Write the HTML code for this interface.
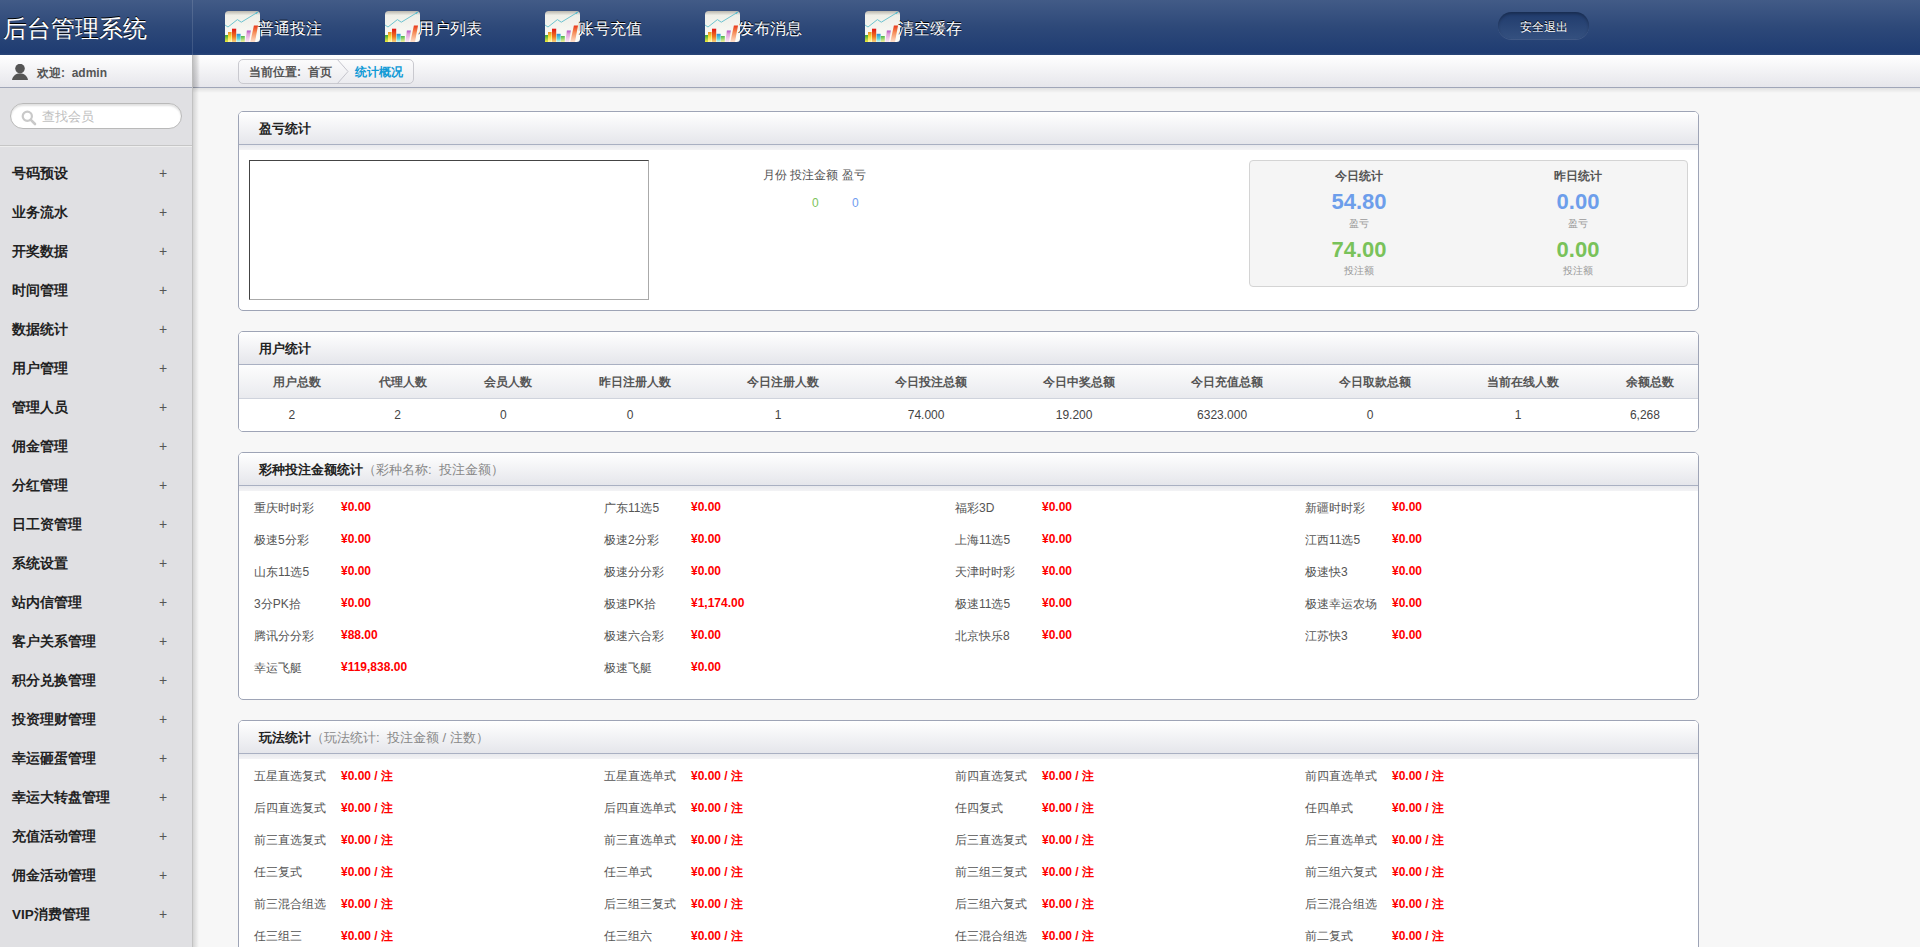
<!DOCTYPE html><html><head><meta charset="utf-8"><style>*{margin:0;padding:0;box-sizing:border-box}
html,body{width:1920px;height:947px;overflow:hidden}
body{font-family:"Liberation Sans",sans-serif;font-size:12px;color:#333;background:#f7f7f7;position:relative}
.abs{position:absolute}
#hdr{left:0;top:0;width:1920px;height:55px;background:linear-gradient(#425b87 0%,#2e4979 48%,#1f3c72 96%,#2d4879 100%);z-index:5}
#hdr .title{left:3px;top:14px;font-size:24px;color:#fff;line-height:30px;white-space:nowrap;text-shadow:0 -1px 0 #000}
#hdr .hdiv{left:192px;top:0;width:1px;height:55px;background:rgba(255,255,255,.13)}
.nav{top:11px;height:31px;width:120px}
.nav .ic{position:absolute;left:0;top:0;width:35px;height:31px}
.nav .ic svg{display:block}
.nav .tx{position:absolute;left:33px;top:9px;font-size:16px;color:#fff;line-height:18px;white-space:nowrap;text-shadow:0 -1px 0 #000}
#logout{left:1498px;top:12px;width:91px;height:27px;border-radius:13.5px;background:linear-gradient(#203b6c,#34507f);box-shadow:inset 0 2px 3px rgba(0,0,0,.25),0 1px 0 rgba(255,255,255,.12);color:#fff;font-size:12px;line-height:14px;padding-top:8px;text-align:center;text-shadow:0 -1px 0 #000}
#side{left:0;top:55px;width:192px;height:892px;background:#e0e0e3}
#sideb{left:192px;top:88px;width:1px;height:859px;background:#c2c2c2}
#sideshadow{left:192px;top:55px;width:8px;height:33px;background:linear-gradient(90deg,rgba(0,0,0,.25),rgba(0,0,0,.12) 60%,rgba(0,0,0,0))}
#sideshadow2{left:193px;top:88px;width:6px;height:859px;background:linear-gradient(90deg,rgba(0,0,0,.14),rgba(0,0,0,0))}
#welcome{left:0;top:55px;width:192px;height:33px;background:linear-gradient(#ffffff,#e6e6eb);border-bottom:1px solid #a0a6b8}
#welcome .pic{left:12px;top:9px}
#welcome .tx{left:37px;top:11px;font-size:12px;font-weight:bold;color:#555;line-height:14px;white-space:nowrap}
#search{left:10px;top:103px;width:172px;height:26px;border-radius:13px;background:#fff;border:1px solid #b9b9b9;box-shadow:inset 0 2px 2px rgba(0,0,0,.12)}
#search .sic{position:absolute;left:10px;top:6px}
#search .sic svg{display:block}
#search .tx{position:absolute;left:31px;top:5px;font-size:13px;color:#c0c0c0;line-height:16px}
#sep{left:0;top:145px;width:192px;height:1px;background:#c6c6c6;box-shadow:0 1px 0 #eee}
.mi{left:12px;font-size:13.5px;font-weight:bold;color:#222;line-height:16px;white-space:nowrap}
.mp{left:159px;font-size:14px;color:#555;line-height:16px}
#crumbbar{left:193px;top:55px;width:1727px;height:33px;background:linear-gradient(#ffffff,#e6e6eb);border-bottom:1px solid #a0a6b8}
#crumbshadow{left:193px;top:88px;width:1727px;height:5px;background:linear-gradient(rgba(0,0,0,.09),rgba(0,0,0,0))}
#crumb{left:238px;top:59px;width:176px;height:25px;border:1px solid #c9c9cf;border-radius:5px;background:linear-gradient(#fbfbfc,#ebebef)}
#crumb .a{position:absolute;left:10px;top:5px;font-weight:bold;color:#555;line-height:14px;white-space:nowrap}
#crumb .arr{position:absolute;left:98px;top:-1px}
#crumb .b{position:absolute;left:116px;top:5px;font-weight:bold;color:#109ad6;line-height:14px;white-space:nowrap}
.panel{left:238px;width:1461px;border:1px solid #9ea4b6;border-radius:5px;background:#fff;overflow:hidden}
.ph{position:absolute;left:0;top:0;width:100%;height:33px;background:linear-gradient(#ffffff,#e5e6eb);border-bottom:1px solid #a9b0c2}
.ph .t{position:absolute;left:20px;top:9px;font-size:13px;font-weight:bold;color:#222;line-height:15px;white-space:nowrap}
.ph .t span{font-weight:normal;color:#888}
.phs{position:absolute;left:0;top:33px;width:100%;height:5px;background:linear-gradient(#e8e9ed,#f3f3f5)}
.chartbox{left:249px;top:160px;width:400px;height:140px;background:#fff;border:1px solid #aaa;border-top-color:#444;border-left-color:#444}
.mtab{left:763px;top:168px;width:120px;height:16px}
.mtab span{position:absolute;top:0;font-size:12px;color:#555;line-height:14px;white-space:nowrap}
.z0{top:196px;font-size:12px;line-height:14px}
.statbox{left:1249px;top:160px;width:439px;height:127px;background:#f5f5f5;border:1px solid #d4d4d4;border-radius:4px}
.st{width:200px;text-align:center;font-weight:bold;color:#555;font-size:12px;line-height:14px}
.sv{width:200px;text-align:center;font-weight:bold;font-size:22px;line-height:24px}
.blue{color:#6d9eeb}.green{color:#79c25a}
.sl{width:200px;text-align:center;color:#999;font-size:10px;line-height:12px}
.throw{position:absolute;left:0;top:33px;width:100%;height:34px;background:linear-gradient(#fdfdfd,#e9eaee);border-bottom:1px solid #cfd3dc}
.tdrow{position:absolute;left:0;top:68px;width:100%;height:33px;background:#fff}
.th{top:375px;text-align:center;font-weight:bold;color:#555;line-height:14px;white-space:nowrap}
.td{top:408px;text-align:center;color:#444;line-height:14px}
.il{font-size:12px;color:#555;line-height:14px;white-space:nowrap}
.iv{font-size:12px;font-weight:bold;color:#f00;line-height:14px;white-space:nowrap}
</style></head><body>
<div id="hdr" class="abs"><div class="abs title">后台管理系统</div><div class="abs hdiv"></div>
<div class="abs nav" style="left:225px"><div class="ic"><svg width="35" height="31" viewBox="0 0 35 31"><defs>
<linearGradient id="n0bg" x1="0" y1="0" x2="0" y2="1"><stop offset="0" stop-color="#b9b6ad"/><stop offset=".14" stop-color="#efefe8"/><stop offset="1" stop-color="#fdfdf9"/></linearGradient>
<linearGradient id="n0g1" x1="0" y1="0" x2="0" y2="1"><stop offset="0" stop-color="#3aa83a"/><stop offset="1" stop-color="#f3ea3a"/></linearGradient>
<linearGradient id="n0g2" x1="0" y1="0" x2="0" y2="1"><stop offset="0" stop-color="#f08a1c"/><stop offset=".5" stop-color="#fde23a"/><stop offset="1" stop-color="#fff7b0"/></linearGradient>
<linearGradient id="n0g3" x1="0" y1="0" x2="0" y2="1"><stop offset="0" stop-color="#e01515"/><stop offset=".6" stop-color="#f07a20"/><stop offset="1" stop-color="#fbd27a"/></linearGradient>
<linearGradient id="n0g4" x1="0" y1="0" x2="0" y2="1"><stop offset="0" stop-color="#2a8fd8"/><stop offset=".6" stop-color="#5fd8d8"/><stop offset="1" stop-color="#d8f8f0"/></linearGradient>
<linearGradient id="n0g5" x1="0" y1="0" x2="0" y2="1"><stop offset="0" stop-color="#4cb84a"/><stop offset="1" stop-color="#f8f0a0"/></linearGradient>
<linearGradient id="n0g6" x1="0" y1="0" x2="0" y2="1"><stop offset="0" stop-color="#b050c0"/><stop offset=".3" stop-color="#e0a0d8"/><stop offset="1" stop-color="#fbe8f4"/></linearGradient>
<linearGradient id="n0g7" x1="0" y1="0" x2="0" y2="1"><stop offset="0" stop-color="#e83a1a"/><stop offset=".4" stop-color="#f58a55"/><stop offset="1" stop-color="#fde0cc"/></linearGradient>
</defs>
<rect x="0" y="0" width="35" height="31" rx="3.5" fill="url(#n0bg)"/>
<polyline points="0,14 3,16 12.4,8.6 16.3,11.2 33,1" fill="none" stroke="#6cc4d0" stroke-width="1"/>
<path d="M33,1 l-2.5,0.6 l1,1.5z" fill="#4ab0c8"/>
<rect x="0" y="24" width="3.4" height="7" fill="url(#n0g1)"/>
<rect x="3" y="21" width="3.6" height="10" fill="url(#n0g2)"/>
<rect x="7" y="17.7" width="4.2" height="13.3" fill="url(#n0g3)"/>
<rect x="11.6" y="22.8" width="4" height="8.2" fill="url(#n0g4)"/>
<rect x="15.8" y="25" width="4" height="6" fill="url(#n0g5)"/>
<path d="M21.9,19.4 L25.9,19.4 L24,31 L20.3,31z" fill="url(#n0g6)"/>
<path d="M28.9,14.6 L33,14.6 L30,31 L25.3,31z" fill="url(#n0g7)"/>
</svg></div><div class="tx">普通投注</div></div>
<div class="abs nav" style="left:385px"><div class="ic"><svg width="35" height="31" viewBox="0 0 35 31"><defs>
<linearGradient id="n1bg" x1="0" y1="0" x2="0" y2="1"><stop offset="0" stop-color="#b9b6ad"/><stop offset=".14" stop-color="#efefe8"/><stop offset="1" stop-color="#fdfdf9"/></linearGradient>
<linearGradient id="n1g1" x1="0" y1="0" x2="0" y2="1"><stop offset="0" stop-color="#3aa83a"/><stop offset="1" stop-color="#f3ea3a"/></linearGradient>
<linearGradient id="n1g2" x1="0" y1="0" x2="0" y2="1"><stop offset="0" stop-color="#f08a1c"/><stop offset=".5" stop-color="#fde23a"/><stop offset="1" stop-color="#fff7b0"/></linearGradient>
<linearGradient id="n1g3" x1="0" y1="0" x2="0" y2="1"><stop offset="0" stop-color="#e01515"/><stop offset=".6" stop-color="#f07a20"/><stop offset="1" stop-color="#fbd27a"/></linearGradient>
<linearGradient id="n1g4" x1="0" y1="0" x2="0" y2="1"><stop offset="0" stop-color="#2a8fd8"/><stop offset=".6" stop-color="#5fd8d8"/><stop offset="1" stop-color="#d8f8f0"/></linearGradient>
<linearGradient id="n1g5" x1="0" y1="0" x2="0" y2="1"><stop offset="0" stop-color="#4cb84a"/><stop offset="1" stop-color="#f8f0a0"/></linearGradient>
<linearGradient id="n1g6" x1="0" y1="0" x2="0" y2="1"><stop offset="0" stop-color="#b050c0"/><stop offset=".3" stop-color="#e0a0d8"/><stop offset="1" stop-color="#fbe8f4"/></linearGradient>
<linearGradient id="n1g7" x1="0" y1="0" x2="0" y2="1"><stop offset="0" stop-color="#e83a1a"/><stop offset=".4" stop-color="#f58a55"/><stop offset="1" stop-color="#fde0cc"/></linearGradient>
</defs>
<rect x="0" y="0" width="35" height="31" rx="3.5" fill="url(#n1bg)"/>
<polyline points="0,14 3,16 12.4,8.6 16.3,11.2 33,1" fill="none" stroke="#6cc4d0" stroke-width="1"/>
<path d="M33,1 l-2.5,0.6 l1,1.5z" fill="#4ab0c8"/>
<rect x="0" y="24" width="3.4" height="7" fill="url(#n1g1)"/>
<rect x="3" y="21" width="3.6" height="10" fill="url(#n1g2)"/>
<rect x="7" y="17.7" width="4.2" height="13.3" fill="url(#n1g3)"/>
<rect x="11.6" y="22.8" width="4" height="8.2" fill="url(#n1g4)"/>
<rect x="15.8" y="25" width="4" height="6" fill="url(#n1g5)"/>
<path d="M21.9,19.4 L25.9,19.4 L24,31 L20.3,31z" fill="url(#n1g6)"/>
<path d="M28.9,14.6 L33,14.6 L30,31 L25.3,31z" fill="url(#n1g7)"/>
</svg></div><div class="tx">用户列表</div></div>
<div class="abs nav" style="left:545px"><div class="ic"><svg width="35" height="31" viewBox="0 0 35 31"><defs>
<linearGradient id="n2bg" x1="0" y1="0" x2="0" y2="1"><stop offset="0" stop-color="#b9b6ad"/><stop offset=".14" stop-color="#efefe8"/><stop offset="1" stop-color="#fdfdf9"/></linearGradient>
<linearGradient id="n2g1" x1="0" y1="0" x2="0" y2="1"><stop offset="0" stop-color="#3aa83a"/><stop offset="1" stop-color="#f3ea3a"/></linearGradient>
<linearGradient id="n2g2" x1="0" y1="0" x2="0" y2="1"><stop offset="0" stop-color="#f08a1c"/><stop offset=".5" stop-color="#fde23a"/><stop offset="1" stop-color="#fff7b0"/></linearGradient>
<linearGradient id="n2g3" x1="0" y1="0" x2="0" y2="1"><stop offset="0" stop-color="#e01515"/><stop offset=".6" stop-color="#f07a20"/><stop offset="1" stop-color="#fbd27a"/></linearGradient>
<linearGradient id="n2g4" x1="0" y1="0" x2="0" y2="1"><stop offset="0" stop-color="#2a8fd8"/><stop offset=".6" stop-color="#5fd8d8"/><stop offset="1" stop-color="#d8f8f0"/></linearGradient>
<linearGradient id="n2g5" x1="0" y1="0" x2="0" y2="1"><stop offset="0" stop-color="#4cb84a"/><stop offset="1" stop-color="#f8f0a0"/></linearGradient>
<linearGradient id="n2g6" x1="0" y1="0" x2="0" y2="1"><stop offset="0" stop-color="#b050c0"/><stop offset=".3" stop-color="#e0a0d8"/><stop offset="1" stop-color="#fbe8f4"/></linearGradient>
<linearGradient id="n2g7" x1="0" y1="0" x2="0" y2="1"><stop offset="0" stop-color="#e83a1a"/><stop offset=".4" stop-color="#f58a55"/><stop offset="1" stop-color="#fde0cc"/></linearGradient>
</defs>
<rect x="0" y="0" width="35" height="31" rx="3.5" fill="url(#n2bg)"/>
<polyline points="0,14 3,16 12.4,8.6 16.3,11.2 33,1" fill="none" stroke="#6cc4d0" stroke-width="1"/>
<path d="M33,1 l-2.5,0.6 l1,1.5z" fill="#4ab0c8"/>
<rect x="0" y="24" width="3.4" height="7" fill="url(#n2g1)"/>
<rect x="3" y="21" width="3.6" height="10" fill="url(#n2g2)"/>
<rect x="7" y="17.7" width="4.2" height="13.3" fill="url(#n2g3)"/>
<rect x="11.6" y="22.8" width="4" height="8.2" fill="url(#n2g4)"/>
<rect x="15.8" y="25" width="4" height="6" fill="url(#n2g5)"/>
<path d="M21.9,19.4 L25.9,19.4 L24,31 L20.3,31z" fill="url(#n2g6)"/>
<path d="M28.9,14.6 L33,14.6 L30,31 L25.3,31z" fill="url(#n2g7)"/>
</svg></div><div class="tx">账号充值</div></div>
<div class="abs nav" style="left:705px"><div class="ic"><svg width="35" height="31" viewBox="0 0 35 31"><defs>
<linearGradient id="n3bg" x1="0" y1="0" x2="0" y2="1"><stop offset="0" stop-color="#b9b6ad"/><stop offset=".14" stop-color="#efefe8"/><stop offset="1" stop-color="#fdfdf9"/></linearGradient>
<linearGradient id="n3g1" x1="0" y1="0" x2="0" y2="1"><stop offset="0" stop-color="#3aa83a"/><stop offset="1" stop-color="#f3ea3a"/></linearGradient>
<linearGradient id="n3g2" x1="0" y1="0" x2="0" y2="1"><stop offset="0" stop-color="#f08a1c"/><stop offset=".5" stop-color="#fde23a"/><stop offset="1" stop-color="#fff7b0"/></linearGradient>
<linearGradient id="n3g3" x1="0" y1="0" x2="0" y2="1"><stop offset="0" stop-color="#e01515"/><stop offset=".6" stop-color="#f07a20"/><stop offset="1" stop-color="#fbd27a"/></linearGradient>
<linearGradient id="n3g4" x1="0" y1="0" x2="0" y2="1"><stop offset="0" stop-color="#2a8fd8"/><stop offset=".6" stop-color="#5fd8d8"/><stop offset="1" stop-color="#d8f8f0"/></linearGradient>
<linearGradient id="n3g5" x1="0" y1="0" x2="0" y2="1"><stop offset="0" stop-color="#4cb84a"/><stop offset="1" stop-color="#f8f0a0"/></linearGradient>
<linearGradient id="n3g6" x1="0" y1="0" x2="0" y2="1"><stop offset="0" stop-color="#b050c0"/><stop offset=".3" stop-color="#e0a0d8"/><stop offset="1" stop-color="#fbe8f4"/></linearGradient>
<linearGradient id="n3g7" x1="0" y1="0" x2="0" y2="1"><stop offset="0" stop-color="#e83a1a"/><stop offset=".4" stop-color="#f58a55"/><stop offset="1" stop-color="#fde0cc"/></linearGradient>
</defs>
<rect x="0" y="0" width="35" height="31" rx="3.5" fill="url(#n3bg)"/>
<polyline points="0,14 3,16 12.4,8.6 16.3,11.2 33,1" fill="none" stroke="#6cc4d0" stroke-width="1"/>
<path d="M33,1 l-2.5,0.6 l1,1.5z" fill="#4ab0c8"/>
<rect x="0" y="24" width="3.4" height="7" fill="url(#n3g1)"/>
<rect x="3" y="21" width="3.6" height="10" fill="url(#n3g2)"/>
<rect x="7" y="17.7" width="4.2" height="13.3" fill="url(#n3g3)"/>
<rect x="11.6" y="22.8" width="4" height="8.2" fill="url(#n3g4)"/>
<rect x="15.8" y="25" width="4" height="6" fill="url(#n3g5)"/>
<path d="M21.9,19.4 L25.9,19.4 L24,31 L20.3,31z" fill="url(#n3g6)"/>
<path d="M28.9,14.6 L33,14.6 L30,31 L25.3,31z" fill="url(#n3g7)"/>
</svg></div><div class="tx">发布消息</div></div>
<div class="abs nav" style="left:865px"><div class="ic"><svg width="35" height="31" viewBox="0 0 35 31"><defs>
<linearGradient id="n4bg" x1="0" y1="0" x2="0" y2="1"><stop offset="0" stop-color="#b9b6ad"/><stop offset=".14" stop-color="#efefe8"/><stop offset="1" stop-color="#fdfdf9"/></linearGradient>
<linearGradient id="n4g1" x1="0" y1="0" x2="0" y2="1"><stop offset="0" stop-color="#3aa83a"/><stop offset="1" stop-color="#f3ea3a"/></linearGradient>
<linearGradient id="n4g2" x1="0" y1="0" x2="0" y2="1"><stop offset="0" stop-color="#f08a1c"/><stop offset=".5" stop-color="#fde23a"/><stop offset="1" stop-color="#fff7b0"/></linearGradient>
<linearGradient id="n4g3" x1="0" y1="0" x2="0" y2="1"><stop offset="0" stop-color="#e01515"/><stop offset=".6" stop-color="#f07a20"/><stop offset="1" stop-color="#fbd27a"/></linearGradient>
<linearGradient id="n4g4" x1="0" y1="0" x2="0" y2="1"><stop offset="0" stop-color="#2a8fd8"/><stop offset=".6" stop-color="#5fd8d8"/><stop offset="1" stop-color="#d8f8f0"/></linearGradient>
<linearGradient id="n4g5" x1="0" y1="0" x2="0" y2="1"><stop offset="0" stop-color="#4cb84a"/><stop offset="1" stop-color="#f8f0a0"/></linearGradient>
<linearGradient id="n4g6" x1="0" y1="0" x2="0" y2="1"><stop offset="0" stop-color="#b050c0"/><stop offset=".3" stop-color="#e0a0d8"/><stop offset="1" stop-color="#fbe8f4"/></linearGradient>
<linearGradient id="n4g7" x1="0" y1="0" x2="0" y2="1"><stop offset="0" stop-color="#e83a1a"/><stop offset=".4" stop-color="#f58a55"/><stop offset="1" stop-color="#fde0cc"/></linearGradient>
</defs>
<rect x="0" y="0" width="35" height="31" rx="3.5" fill="url(#n4bg)"/>
<polyline points="0,14 3,16 12.4,8.6 16.3,11.2 33,1" fill="none" stroke="#6cc4d0" stroke-width="1"/>
<path d="M33,1 l-2.5,0.6 l1,1.5z" fill="#4ab0c8"/>
<rect x="0" y="24" width="3.4" height="7" fill="url(#n4g1)"/>
<rect x="3" y="21" width="3.6" height="10" fill="url(#n4g2)"/>
<rect x="7" y="17.7" width="4.2" height="13.3" fill="url(#n4g3)"/>
<rect x="11.6" y="22.8" width="4" height="8.2" fill="url(#n4g4)"/>
<rect x="15.8" y="25" width="4" height="6" fill="url(#n4g5)"/>
<path d="M21.9,19.4 L25.9,19.4 L24,31 L20.3,31z" fill="url(#n4g6)"/>
<path d="M28.9,14.6 L33,14.6 L30,31 L25.3,31z" fill="url(#n4g7)"/>
</svg></div><div class="tx">清空缓存</div></div>
<div id="logout" class="abs">安全退出</div></div>
<div id="side" class="abs"></div><div id="sideb" class="abs"></div>
<div id="welcome" class="abs"><div class="abs pic"><svg width="16" height="16" viewBox="0 0 16 16"><circle cx="8" cy="4.6" r="4.8" fill="#555"/><path d="M0,16 C1,11.5 4,9.6 8,9.6 C12,9.6 15,11.5 16,16z" fill="#555"/></svg></div><div class="abs tx">欢迎:&nbsp;&nbsp;admin</div></div>
<div id="search" class="abs"><div class="sic"><svg width="16" height="16" viewBox="0 0 16 16"><circle cx="6.3" cy="6.3" r="4.6" fill="none" stroke="#c9c9c9" stroke-width="2.2"/><path d="M9.6,9.6 L14,14" stroke="#c9c9c9" stroke-width="2.6" stroke-linecap="round"/></svg></div><div class="tx">查找会员</div></div>
<div id="sep" class="abs"></div>
<div class="abs mi" style="top:166px">号码预设</div><div class="abs mp" style="top:165px">+</div>
<div class="abs mi" style="top:205px">业务流水</div><div class="abs mp" style="top:204px">+</div>
<div class="abs mi" style="top:244px">开奖数据</div><div class="abs mp" style="top:243px">+</div>
<div class="abs mi" style="top:283px">时间管理</div><div class="abs mp" style="top:282px">+</div>
<div class="abs mi" style="top:322px">数据统计</div><div class="abs mp" style="top:321px">+</div>
<div class="abs mi" style="top:361px">用户管理</div><div class="abs mp" style="top:360px">+</div>
<div class="abs mi" style="top:400px">管理人员</div><div class="abs mp" style="top:399px">+</div>
<div class="abs mi" style="top:439px">佣金管理</div><div class="abs mp" style="top:438px">+</div>
<div class="abs mi" style="top:478px">分红管理</div><div class="abs mp" style="top:477px">+</div>
<div class="abs mi" style="top:517px">日工资管理</div><div class="abs mp" style="top:516px">+</div>
<div class="abs mi" style="top:556px">系统设置</div><div class="abs mp" style="top:555px">+</div>
<div class="abs mi" style="top:595px">站内信管理</div><div class="abs mp" style="top:594px">+</div>
<div class="abs mi" style="top:634px">客户关系管理</div><div class="abs mp" style="top:633px">+</div>
<div class="abs mi" style="top:673px">积分兑换管理</div><div class="abs mp" style="top:672px">+</div>
<div class="abs mi" style="top:712px">投资理财管理</div><div class="abs mp" style="top:711px">+</div>
<div class="abs mi" style="top:751px">幸运砸蛋管理</div><div class="abs mp" style="top:750px">+</div>
<div class="abs mi" style="top:790px">幸运大转盘管理</div><div class="abs mp" style="top:789px">+</div>
<div class="abs mi" style="top:829px">充值活动管理</div><div class="abs mp" style="top:828px">+</div>
<div class="abs mi" style="top:868px">佣金活动管理</div><div class="abs mp" style="top:867px">+</div>
<div class="abs mi" style="top:907px">VIP消费管理</div><div class="abs mp" style="top:906px">+</div>
<div id="crumbbar" class="abs"></div><div id="crumbshadow" class="abs"></div><div id="sideshadow" class="abs"></div><div id="sideshadow2" class="abs"></div>
<div id="crumb" class="abs"><div class="a">当前位置:&nbsp;&nbsp;首页</div><svg class="arr" width="14" height="25" viewBox="0 0 14 25"><path d="M0,0 L11,12.5 L0,25" fill="none" stroke="#c4c4cc" stroke-width="1"/></svg><div class="b">统计概况</div></div>
<div class="abs panel" style="top:111px;height:200px"><div class="ph"><div class="t">盈亏统计</div></div><div class="phs"></div></div>
<div class="abs chartbox"></div>
<div class="abs mtab"><span style="left:0">月份</span><span style="left:27px">投注金额</span><span style="left:79px">盈亏</span></div>
<div class="abs z0" style="left:812px;color:#7cc45a">0</div><div class="abs z0" style="left:852px;color:#6f9cf0">0</div>
<div class="abs statbox"></div>
<div class="abs st" style="left:1259px;top:169px">今日统计</div>
<div class="abs sv blue" style="left:1259px;top:190px">54.80</div>
<div class="abs sl" style="left:1259px;top:218px">盈亏</div>
<div class="abs sv green" style="left:1259px;top:238px">74.00</div>
<div class="abs sl" style="left:1259px;top:265px">投注额</div>
<div class="abs st" style="left:1478px;top:169px">昨日统计</div>
<div class="abs sv blue" style="left:1478px;top:190px">0.00</div>
<div class="abs sl" style="left:1478px;top:218px">盈亏</div>
<div class="abs sv green" style="left:1478px;top:238px">0.00</div>
<div class="abs sl" style="left:1478px;top:265px">投注额</div>
<div class="abs panel" style="top:331px;height:101px"><div class="ph"><div class="t">用户统计</div></div><div class="throw"></div><div class="tdrow"></div></div>
<div class="abs th" style="left:244.0px;width:105.7px">用户总数</div>
<div class="abs td" style="left:239.0px;width:105.7px">2</div>
<div class="abs th" style="left:349.7px;width:105.7px">代理人数</div>
<div class="abs td" style="left:344.7px;width:105.7px">2</div>
<div class="abs th" style="left:455.4px;width:105.7px">会员人数</div>
<div class="abs td" style="left:450.4px;width:105.7px">0</div>
<div class="abs th" style="left:561.1px;width:148.0px">昨日注册人数</div>
<div class="abs td" style="left:556.1px;width:148.0px">0</div>
<div class="abs th" style="left:709.1px;width:148.0px">今日注册人数</div>
<div class="abs td" style="left:704.1px;width:148.0px">1</div>
<div class="abs th" style="left:857.1px;width:148.0px">今日投注总额</div>
<div class="abs td" style="left:852.1px;width:148.0px">74.000</div>
<div class="abs th" style="left:1005.1px;width:148.0px">今日中奖总额</div>
<div class="abs td" style="left:1000.1px;width:148.0px">19.200</div>
<div class="abs th" style="left:1153.1px;width:148.0px">今日充值总额</div>
<div class="abs td" style="left:1148.1px;width:148.0px">6323.000</div>
<div class="abs th" style="left:1301.1px;width:148.0px">今日取款总额</div>
<div class="abs td" style="left:1296.1px;width:148.0px">0</div>
<div class="abs th" style="left:1449.1px;width:148.0px">当前在线人数</div>
<div class="abs td" style="left:1444.1px;width:148.0px">1</div>
<div class="abs th" style="left:1597.1px;width:105.7px">余额总数</div>
<div class="abs td" style="left:1592.1px;width:105.7px">6,268</div>
<div class="abs panel" style="top:452px;height:248px"><div class="ph"><div class="t">彩种投注金额统计<span>（彩种名称:&nbsp;&nbsp;投注金额）</span></div></div><div class="phs"></div></div>
<div class="abs il" style="left:254px;top:501px">重庆时时彩</div><div class="abs iv" style="left:341px;top:500px">¥0.00</div>
<div class="abs il" style="left:604px;top:501px">广东11选5</div><div class="abs iv" style="left:691px;top:500px">¥0.00</div>
<div class="abs il" style="left:955px;top:501px">福彩3D</div><div class="abs iv" style="left:1042px;top:500px">¥0.00</div>
<div class="abs il" style="left:1305px;top:501px">新疆时时彩</div><div class="abs iv" style="left:1392px;top:500px">¥0.00</div>
<div class="abs il" style="left:254px;top:533px">极速5分彩</div><div class="abs iv" style="left:341px;top:532px">¥0.00</div>
<div class="abs il" style="left:604px;top:533px">极速2分彩</div><div class="abs iv" style="left:691px;top:532px">¥0.00</div>
<div class="abs il" style="left:955px;top:533px">上海11选5</div><div class="abs iv" style="left:1042px;top:532px">¥0.00</div>
<div class="abs il" style="left:1305px;top:533px">江西11选5</div><div class="abs iv" style="left:1392px;top:532px">¥0.00</div>
<div class="abs il" style="left:254px;top:565px">山东11选5</div><div class="abs iv" style="left:341px;top:564px">¥0.00</div>
<div class="abs il" style="left:604px;top:565px">极速分分彩</div><div class="abs iv" style="left:691px;top:564px">¥0.00</div>
<div class="abs il" style="left:955px;top:565px">天津时时彩</div><div class="abs iv" style="left:1042px;top:564px">¥0.00</div>
<div class="abs il" style="left:1305px;top:565px">极速快3</div><div class="abs iv" style="left:1392px;top:564px">¥0.00</div>
<div class="abs il" style="left:254px;top:597px">3分PK拾</div><div class="abs iv" style="left:341px;top:596px">¥0.00</div>
<div class="abs il" style="left:604px;top:597px">极速PK拾</div><div class="abs iv" style="left:691px;top:596px">¥1,174.00</div>
<div class="abs il" style="left:955px;top:597px">极速11选5</div><div class="abs iv" style="left:1042px;top:596px">¥0.00</div>
<div class="abs il" style="left:1305px;top:597px">极速幸运农场</div><div class="abs iv" style="left:1392px;top:596px">¥0.00</div>
<div class="abs il" style="left:254px;top:629px">腾讯分分彩</div><div class="abs iv" style="left:341px;top:628px">¥88.00</div>
<div class="abs il" style="left:604px;top:629px">极速六合彩</div><div class="abs iv" style="left:691px;top:628px">¥0.00</div>
<div class="abs il" style="left:955px;top:629px">北京快乐8</div><div class="abs iv" style="left:1042px;top:628px">¥0.00</div>
<div class="abs il" style="left:1305px;top:629px">江苏快3</div><div class="abs iv" style="left:1392px;top:628px">¥0.00</div>
<div class="abs il" style="left:254px;top:661px">幸运飞艇</div><div class="abs iv" style="left:341px;top:660px">¥119,838.00</div>
<div class="abs il" style="left:604px;top:661px">极速飞艇</div><div class="abs iv" style="left:691px;top:660px">¥0.00</div>
<div class="abs panel" style="top:720px;height:260px"><div class="ph"><div class="t">玩法统计<span>（玩法统计:&nbsp;&nbsp;投注金额 / 注数）</span></div></div><div class="phs"></div></div>
<div class="abs il" style="left:254px;top:769px">五星直选复式</div><div class="abs iv" style="left:341px;top:769px">¥0.00 / 注</div>
<div class="abs il" style="left:604px;top:769px">五星直选单式</div><div class="abs iv" style="left:691px;top:769px">¥0.00 / 注</div>
<div class="abs il" style="left:955px;top:769px">前四直选复式</div><div class="abs iv" style="left:1042px;top:769px">¥0.00 / 注</div>
<div class="abs il" style="left:1305px;top:769px">前四直选单式</div><div class="abs iv" style="left:1392px;top:769px">¥0.00 / 注</div>
<div class="abs il" style="left:254px;top:801px">后四直选复式</div><div class="abs iv" style="left:341px;top:801px">¥0.00 / 注</div>
<div class="abs il" style="left:604px;top:801px">后四直选单式</div><div class="abs iv" style="left:691px;top:801px">¥0.00 / 注</div>
<div class="abs il" style="left:955px;top:801px">任四复式</div><div class="abs iv" style="left:1042px;top:801px">¥0.00 / 注</div>
<div class="abs il" style="left:1305px;top:801px">任四单式</div><div class="abs iv" style="left:1392px;top:801px">¥0.00 / 注</div>
<div class="abs il" style="left:254px;top:833px">前三直选复式</div><div class="abs iv" style="left:341px;top:833px">¥0.00 / 注</div>
<div class="abs il" style="left:604px;top:833px">前三直选单式</div><div class="abs iv" style="left:691px;top:833px">¥0.00 / 注</div>
<div class="abs il" style="left:955px;top:833px">后三直选复式</div><div class="abs iv" style="left:1042px;top:833px">¥0.00 / 注</div>
<div class="abs il" style="left:1305px;top:833px">后三直选单式</div><div class="abs iv" style="left:1392px;top:833px">¥0.00 / 注</div>
<div class="abs il" style="left:254px;top:865px">任三复式</div><div class="abs iv" style="left:341px;top:865px">¥0.00 / 注</div>
<div class="abs il" style="left:604px;top:865px">任三单式</div><div class="abs iv" style="left:691px;top:865px">¥0.00 / 注</div>
<div class="abs il" style="left:955px;top:865px">前三组三复式</div><div class="abs iv" style="left:1042px;top:865px">¥0.00 / 注</div>
<div class="abs il" style="left:1305px;top:865px">前三组六复式</div><div class="abs iv" style="left:1392px;top:865px">¥0.00 / 注</div>
<div class="abs il" style="left:254px;top:897px">前三混合组选</div><div class="abs iv" style="left:341px;top:897px">¥0.00 / 注</div>
<div class="abs il" style="left:604px;top:897px">后三组三复式</div><div class="abs iv" style="left:691px;top:897px">¥0.00 / 注</div>
<div class="abs il" style="left:955px;top:897px">后三组六复式</div><div class="abs iv" style="left:1042px;top:897px">¥0.00 / 注</div>
<div class="abs il" style="left:1305px;top:897px">后三混合组选</div><div class="abs iv" style="left:1392px;top:897px">¥0.00 / 注</div>
<div class="abs il" style="left:254px;top:929px">任三组三</div><div class="abs iv" style="left:341px;top:929px">¥0.00 / 注</div>
<div class="abs il" style="left:604px;top:929px">任三组六</div><div class="abs iv" style="left:691px;top:929px">¥0.00 / 注</div>
<div class="abs il" style="left:955px;top:929px">任三混合组选</div><div class="abs iv" style="left:1042px;top:929px">¥0.00 / 注</div>
<div class="abs il" style="left:1305px;top:929px">前二复式</div><div class="abs iv" style="left:1392px;top:929px">¥0.00 / 注</div>
</body></html>
